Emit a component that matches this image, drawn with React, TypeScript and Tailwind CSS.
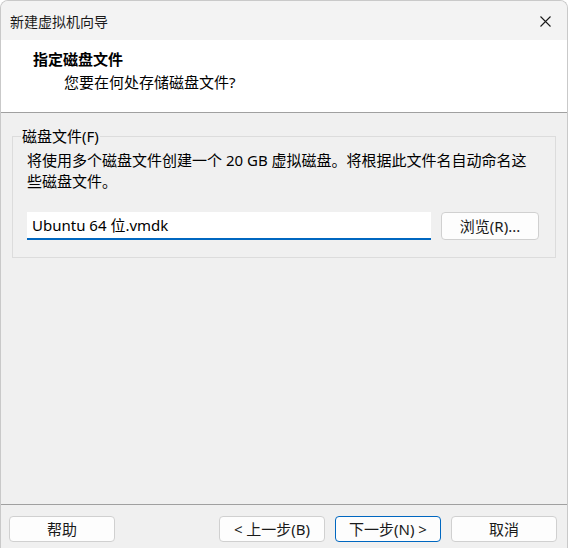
import React from "react";

const font = { fontFamily: '"Noto Sans", "Noto Sans CJK SC", sans-serif' };

function Btn({ children, primary = false }: { children: React.ReactNode; primary?: boolean }) {
  return (
    <div
      className={
        "h-[26px] w-[106px] rounded-[4px] bg-[#fdfdfd] flex items-center justify-center text-[15px] text-[#1a1a1a] border " +
        (primary ? "border-[#0067c0]" : "border-[#d0d0d0]")
      }
    >
      {children}
    </div>
  );
}

export default function App() {
  return (
    <div className="w-[568px] h-[548px] bg-white overflow-hidden" style={font}>
      <div className="w-[568px] h-[548px] flex flex-col rounded-t-[8px] border-x border-t border-[#c9c9c9] overflow-hidden bg-[#f0f0f0]">
        {/* Title bar */}
        <div className="h-[39px] shrink-0 bg-[#f3f3f3] flex items-center justify-between pl-[9px] pr-[16px]">
          <span className="text-[14px] text-[#1a1a1a] leading-[20px] mt-[2px]">新建虚拟机向导</span>
          <svg width="11" height="11" viewBox="0 0 11 11" className="mt-[2px]">
            <path d="M0.5 0.5 L10.5 10.5 M10.5 0.5 L0.5 10.5" stroke="#1a1a1a" strokeWidth="1.1" fill="none" />
          </svg>
        </div>
        {/* Header */}
        <div className="h-[73px] shrink-0 bg-white border-b border-[#a0a0a0] pl-[32px] pt-[9px]">
          <div className="text-[15px] font-bold leading-[20px] text-black">指定磁盘文件</div>
          <div className="text-[15px] leading-[20px] text-black mt-[3px] pl-[31px]">您要在何处存储磁盘文件?</div>
        </div>
        {/* Body */}
        <div className="flex-1 px-[11px] pt-[13px]">
          <fieldset className="border border-[#dcdcdc] w-[544px] px-[14px] pb-[17px]">
            <legend className="-ml-[6px] px-[1px] text-[15px] leading-[21px] text-black">磁盘文件(F)</legend>
            <div className="text-[15px] leading-[21px] text-black pt-[3px] pr-[8px]">
              将使用多个磁盘文件创建一个 20 GB 虚拟磁盘。将根据此文件名自动命名这些磁盘文件。
            </div>
            <div className="flex items-center gap-[10px] mt-[20px]">
              <div className="w-[404px] h-[28px] bg-white border-b-2 border-[#0067c0] flex items-center pl-[5px] text-[15px] text-black">
                Ubuntu 64 位.vmdk
              </div>
              <div className="w-[98px] h-[28px] rounded-[4px] bg-[#fdfdfd] border border-[#d0d0d0] flex items-center justify-center text-[15px] text-[#1a1a1a]">
                浏览(R)...
              </div>
            </div>
          </fieldset>
        </div>
        {/* Footer */}
        <div className="shrink-0 border-t border-[#a0a0a0] pt-[11px] pb-[6px] pl-[8px] pr-[10px] flex items-center">
          <Btn>帮助</Btn>
          <div className="flex-1" />
          <div className="flex gap-[10px]">
            <Btn>&lt; 上一步(B)</Btn>
            <Btn primary>下一步(N) &gt;</Btn>
            <Btn>取消</Btn>
          </div>
        </div>
      </div>
    </div>
  );
}
